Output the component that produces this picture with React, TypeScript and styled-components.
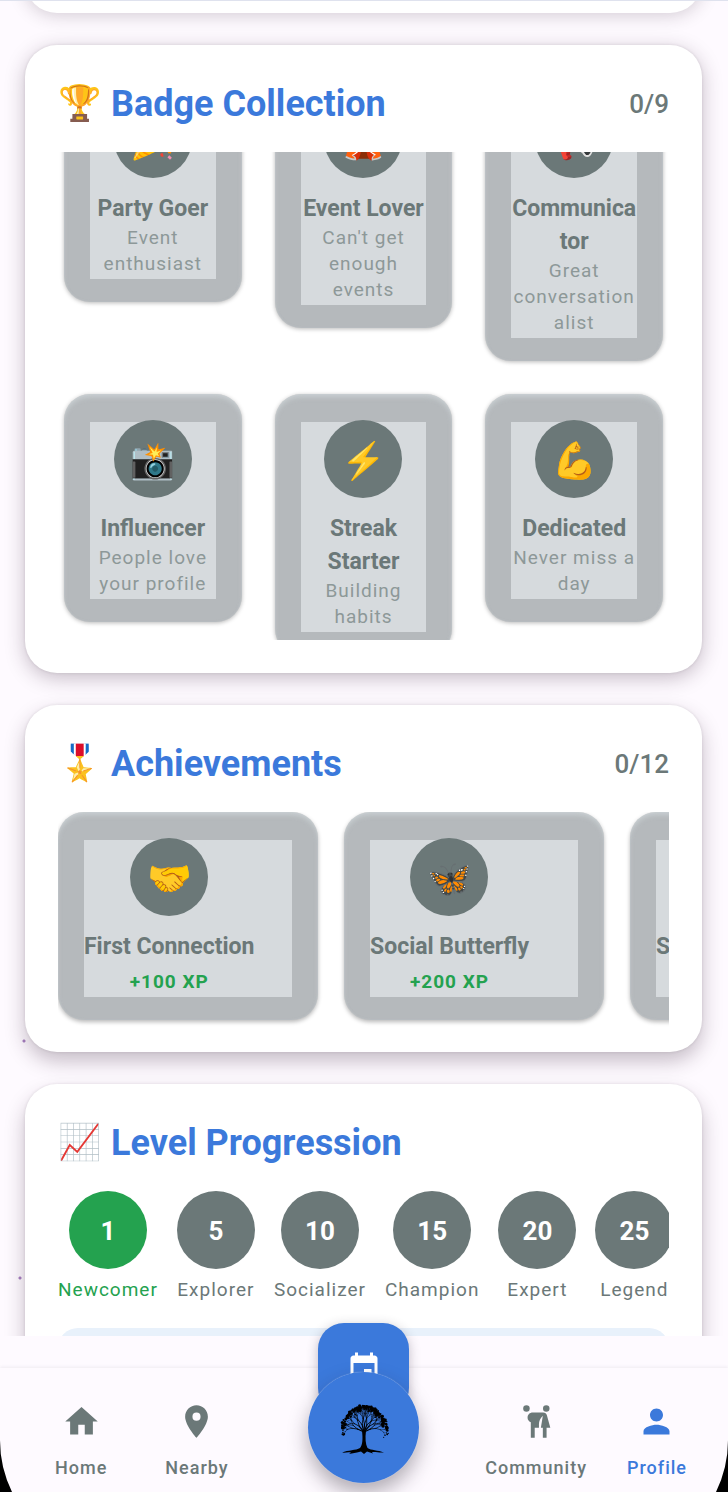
import React, { useLayoutEffect, useRef } from 'react';
import styled, { createGlobalStyle } from 'styled-components';
import { MdEvent, MdHome, MdLocationOn, MdPerson } from 'react-icons/md';

const blue = '#3b79db';
const slate = '#6b7878';
const green = '#24a24f';
const surface = '#fefaff';

const GlobalStyle = createGlobalStyle`
  *, *::before, *::after { box-sizing: border-box; }
  body {
    margin: 0;
    background: ${surface};
    font-family: Roboto, "Liberation Sans", sans-serif;
    color: ${slate};
  }
  h2, h3, p, ul { margin: 0; padding: 0; }
  ul { list-style: none; }
  button { font: inherit; color: inherit; border: 0; padding: 0; background: none; cursor: pointer; }
`;

const Page = styled.div`
  height: 100vh;
  display: flex;
  flex-direction: column;
  overflow: hidden;
`;

const Feed = styled.main`
  flex: 1;
  min-height: 0;
  overflow: hidden;
  display: flex;
  flex-direction: column;
  gap: 32px;
  padding: 0 26px 0 25px;
  border-top: 1px solid #dfe2ee;
  background:
    radial-gradient(circle at 24px 1040px, #a77fc0 1px, transparent 2px),
    radial-gradient(circle at 20px 1277px, #a77fc0 1px, transparent 2px),
    ${surface};
`;

const Card = styled.section<{ $lift: number }>`
  flex: none;
  padding: 33px;
  border-radius: 32px;
  background: #fff;
  box-shadow:
    0 0 3px rgba(50, 30, 50, 0.12),
    0 ${(p) => p.$lift}px 20px rgba(50, 30, 50, 0.28);
`;

const CardTail = styled.div`
  flex: none;
  height: 72px;
  margin-top: -60px;
  border-radius: 32px;
  background: #fff;
  box-shadow: 0 2px 18px rgba(50, 30, 50, 0.22);
`;

const CardHeader = styled.header`
  display: flex;
  align-items: center;
  justify-content: space-between;
  height: 52px;
  margin-bottom: 22px;
`;

const CardTitle = styled.h2`
  display: flex;
  align-items: center;
  gap: 10px;
  font-size: 36px;
  line-height: 52px;
  font-weight: 700;
  color: ${blue};
`;

const TitleEmoji = styled.span`
  width: 43px;
  font-size: 35px;
  text-align: center;
`;

const Count = styled.span`
  font-size: 26px;
  line-height: 36px;
  font-weight: 500;
`;

const BadgeViewport = styled.div`
  height: 488px;
  overflow: hidden;
`;

const BadgeGrid = styled.ul`
  display: grid;
  grid-template-columns: repeat(3, minmax(0, 1fr));
  align-items: start;
  gap: 33px;
  padding: 6px;
`;

const Tile = styled.li<{ $row?: boolean }>`
  flex: none;
  width: ${(p) => (p.$row ? '260px' : 'auto')};
  display: flex;
  flex-direction: column;
  align-items: ${(p) => (p.$row ? 'flex-start' : 'stretch')};
  padding: 26px 26px 25px;
  border-radius: 26px;
  background:
    linear-gradient(#d6dadd, #d6dadd) 0 2px / 100% 100% no-repeat content-box border-box,
    #b5b9bc;
  box-shadow:
    0 ${(p) => (p.$row ? 2 : 1)}px 4px rgba(0, 0, 0, 0.28),
    inset 0 4px 5px -1px rgba(210, 216, 219, 0.7),
    inset 0 0 2px rgba(210, 216, 219, 0.5);
`;

const TileBody = styled.div<{ $wide?: boolean }>`
  display: flex;
  flex-direction: column;
  align-items: center;
  width: ${(p) => (p.$wide ? '100%' : 'auto')};
  text-align: ${(p) => (p.$wide ? 'start' : 'center')};
`;

const Disc = styled.div<{ $active?: boolean }>`
  flex: none;
  width: 78px;
  height: 78px;
  border-radius: 50%;
  display: flex;
  align-items: center;
  justify-content: center;
  background: ${(p) => (p.$active ? green : slate)};
`;

const DiscEmoji = styled.span`
  padding-top: 3px;
  font-size: 36px;
  line-height: 42px;
`;

const TileName = styled.h3`
  align-self: stretch;
  margin-top: 14px;
  font-size: 23px;
  line-height: 33px;
  font-weight: 700;
  overflow-wrap: anywhere;
`;

const TileNote = styled.p`
  align-self: stretch;
  font-size: 19px;
  line-height: 26px;
  letter-spacing: 1px;
  color: #8d9898;
  overflow-wrap: anywhere;
`;

const Reward = styled.p`
  margin-top: 6px;
  font-size: 19px;
  line-height: 26px;
  font-weight: 700;
  letter-spacing: 1px;
  color: ${green};
`;

const Strip = styled.ul<{ $gap: number }>`
  display: flex;
  gap: ${(p) => p.$gap}px;
  overflow: hidden;
  padding-bottom: 8px;
  margin-bottom: -9px;
`;

const Level = styled.li<{ $active?: boolean }>`
  flex: none;
  display: flex;
  flex-direction: column;
  align-items: center;
  gap: 8px;
  font-size: 19px;
  line-height: 26px;
  letter-spacing: 1px;
  color: ${(p) => (p.$active ? green : slate)};
`;

const LevelNumber = styled.span`
  padding-top: 2px;
  font-size: 26px;
  line-height: 36px;
  font-weight: 700;
  letter-spacing: 0;
  color: #fff;
`;

const ProgressPanel = styled.div`
  height: 120px;
  margin-top: 26px;
  border-radius: 20px;
  background: #e8f1fb;
`;

const Footer = styled.footer`
  position: relative;
  flex: none;
  padding-top: 32px;
  background: ${surface};
`;

const NavBar = styled.nav`
  display: grid;
  grid-template-columns: 1fr 111px 1fr;
  height: 124px;
  background: ${surface};
  box-shadow: 0 -1px 3px rgba(60, 60, 80, 0.08);
`;

const NavGroup = styled.div<{ $end?: boolean }>`
  grid-column: ${(p) => (p.$end ? 3 : 1)};
  display: flex;
  align-items: flex-start;
  justify-content: ${(p) => (p.$end ? 'flex-end' : 'flex-start')};
  gap: ${(p) => (p.$end ? 40 : 58)}px;
  padding: ${(p) => (p.$end ? '34px 41px 0 0' : '34px 0 0 55px')};
`;

const NavItem = styled.button<{ $active?: boolean }>`
  display: flex;
  flex-direction: column;
  align-items: center;
  gap: 14px;
  font-size: 18px;
  line-height: 26px;
  font-weight: 500;
  letter-spacing: 1px;
  color: ${(p) => (p.$active ? blue : slate)};

  svg { width: 39px; height: 39px; display: block; }
`;

const FloatingStack = styled.div`
  position: absolute;
  left: 0;
  right: 1px;
  top: -13px;
  margin: 0 auto;
  width: 111px;
  display: flex;
  flex-direction: column;
  align-items: center;
`;

const EventButton = styled.button`
  width: 91px;
  height: 91px;
  border-radius: 26px;
  display: flex;
  align-items: center;
  justify-content: center;
  background: ${blue};
  color: #fff;
  box-shadow: 0 3px 12px rgba(50, 40, 60, 0.3);
`;

const TreeButton = styled.button`
  width: 111px;
  height: 111px;
  margin-top: -42px;
  border-radius: 50%;
  display: flex;
  align-items: center;
  justify-content: center;
  background: ${blue};
  box-shadow:
    0 0 1px rgba(255, 255, 255, 0.7),
    0 10px 20px rgba(40, 30, 45, 0.36);
`;

const Corner = styled.svg<{ $right?: boolean }>`
  position: absolute;
  bottom: 0;
  ${(p) => (p.$right ? 'right: 0; transform: scaleX(-1);' : 'left: 0;')}
`;

function CommunityIcon() {
  return (
    <svg viewBox="0 0 24 24" fill="currentColor" aria-hidden="true">
      <circle cx="5.8" cy="4" r="2" />
      <circle cx="18" cy="4" r="2" />
      <path d="M8.500 22V12.400C7.200 11.900 6.500 10.900 6.500 9.700C6.500 7.800 7.800 6.500 9.700 6.500H16C17.400 6.500 18 7 18.400 8.200L20.500 15.800H18.200V22H15.900V15.800H14.700L15.900 8.500C14.300 10 13.500 11.800 13.500 13.800V15.800H10.900V22Z" />
    </svg>
  );
}

type Segment = { x1: number; y1: number; x2: number; y2: number; w: number };

function growTree() {
  const segments: Segment[] = [];
  const leaves: { x: number; y: number; r: number }[] = [];
  let seed = 11;
  const rand = () => {
    seed = (seed * 16807) % 2147483647;
    return seed / 2147483647;
  };
  const grow = (x: number, y: number, angle: number, length: number, width: number, depth: number) => {
    const x2 = x + Math.cos(angle) * length;
    const y2 = y - Math.sin(angle) * length * 1.1;
    segments.push({ x1: x, y1: y, x2, y2, w: width });
    if (depth === 0) {
      leaves.push({ x: x2, y: y2, r: 0.5 + rand() * 1.2 });
      leaves.push({ x: x2 + rand() * 3 - 1.5, y: y2 + rand() * 3, r: 0.4 + rand() * 0.7 });
      return;
    }
    const spread = 0.26 + rand() * 0.26;
    const reach = 0.74 + rand() * 0.13;
    grow(x2, y2, angle + spread, length * reach, width * 0.68, depth - 1);
    grow(x2, y2, angle - spread, length * reach, width * 0.68, depth - 1);
  };
  [2.75, 2.3, 1.85, 1.5, 1.15, 0.8, 0.4].forEach((a) => grow(25, 31, a, 7, 1.2, 4));
  return { segments, leaves };
}

const tree = growTree();

function TreeLogo() {
  return (
    <svg width="50" height="54" viewBox="0 0 50 54" aria-hidden="true">
      <g stroke="#000" strokeLinecap="round">
        {tree.segments.map((s, i) => (
          <line key={i} x1={s.x1} y1={s.y1} x2={s.x2} y2={s.y2} strokeWidth={s.w} />
        ))}
      </g>
      {tree.leaves.map((l, i) => (
        <circle key={i} cx={l.x} cy={l.y} r={l.r} />
      ))}
      <path d="M23 30C24 38 23.500 44 21 47C17 49.500 9 49 3 51.500C6 52 8 51 12 51.500L10 53L18 51.500L22 50.500L25 53L28 50.500L34 52.500L33 51C37 50.500 40 52 45 51.500C39 49 32 49.500 28.500 47C26.500 43 26 37 27 30Z" />
    </svg>
  );
}

const badges = [
  { emoji: '🎉', name: 'Party Goer', note: 'Event enthusiast' },
  { emoji: '🎪', name: 'Event Lover', note: "Can't get enough events" },
  { emoji: '📢', name: 'Communicator', note: 'Great conversationalist' },
  { emoji: '📸', name: 'Influencer', note: 'People love your profile' },
  { emoji: '⚡', name: 'Streak Starter', note: 'Building habits' },
  { emoji: '💪', name: 'Dedicated', note: 'Never miss a day' },
];

const achievements = [
  { emoji: '🤝', name: 'First Connection', reward: '+100 XP' },
  { emoji: '🦋', name: 'Social Butterfly', reward: '+200 XP' },
  { emoji: '', name: 'S', reward: '', wide: true },
];

const levels = [
  { value: 1, name: 'Newcomer', active: true },
  { value: 5, name: 'Explorer' },
  { value: 10, name: 'Socializer' },
  { value: 15, name: 'Champion' },
  { value: 20, name: 'Expert' },
  { value: 25, name: 'Legend' },
];

function SectionHeader({ emoji, title, count }: { emoji: string; title: string; count?: string }) {
  return (
    <CardHeader>
      <CardTitle>
        <TitleEmoji>{emoji}</TitleEmoji>
        {title}
      </CardTitle>
      {count && <Count>{count}</Count>}
    </CardHeader>
  );
}

export default function App() {
  const badgeScroll = useRef<HTMLDivElement>(null);

  useLayoutEffect(() => {
    if (badgeScroll.current) badgeScroll.current.scrollTop = 84;
  }, []);

  return (
    <Page>
      <GlobalStyle />
      <Feed>
        <CardTail />
        <Card $lift={5}>
          <SectionHeader emoji="🏆" title="Badge Collection" count="0/9" />
          <BadgeViewport ref={badgeScroll}>
            <BadgeGrid>
              {badges.map((b) => (
                <Tile key={b.name}>
                  <TileBody>
                    <Disc><DiscEmoji>{b.emoji}</DiscEmoji></Disc>
                    <TileName>{b.name}</TileName>
                    <TileNote>{b.note}</TileNote>
                  </TileBody>
                </Tile>
              ))}
            </BadgeGrid>
          </BadgeViewport>
        </Card>
        <Card $lift={9}>
          <SectionHeader emoji="🎖️" title="Achievements" count="0/12" />
          <Strip $gap={26}>
            {achievements.map((a) => (
              <Tile key={a.name} $row>
                <TileBody $wide={a.wide}>
                  <Disc><DiscEmoji>{a.emoji}</DiscEmoji></Disc>
                  <TileName>{a.name}</TileName>
                  {a.reward && <Reward>{a.reward}</Reward>}
                </TileBody>
              </Tile>
            ))}
          </Strip>
        </Card>
        <Card $lift={11}>
          <SectionHeader emoji="📈" title="Level Progression" />
          <Strip $gap={19}>
            {levels.map((l) => (
              <Level key={l.value} $active={l.active}>
                <Disc $active={l.active}><LevelNumber>{l.value}</LevelNumber></Disc>
                {l.name}
              </Level>
            ))}
          </Strip>
          <ProgressPanel />
        </Card>
      </Feed>
      <Footer>
        <NavBar>
          <NavGroup>
            <NavItem type="button"><MdHome />Home</NavItem>
            <NavItem type="button"><MdLocationOn />Nearby</NavItem>
          </NavGroup>
          <NavGroup $end>
            <NavItem type="button"><CommunityIcon />Community</NavItem>
            <NavItem type="button" $active aria-current="page"><MdPerson />Profile</NavItem>
          </NavGroup>
        </NavBar>
        <FloatingStack>
          <EventButton type="button" aria-label="Events"><MdEvent size={36} /></EventButton>
          <TreeButton type="button" aria-label="Menu"><TreeLogo /></TreeButton>
        </FloatingStack>
        <Corner width="13" height="52" viewBox="0 0 13 52" aria-hidden="true">
          <path d="M0 0A118 118 0 0 0 12 52H0Z" />
        </Corner>
        <Corner $right width="13" height="52" viewBox="0 0 13 52" aria-hidden="true">
          <path d="M0 0A118 118 0 0 0 12 52H0Z" />
        </Corner>
      </Footer>
    </Page>
  );
}
